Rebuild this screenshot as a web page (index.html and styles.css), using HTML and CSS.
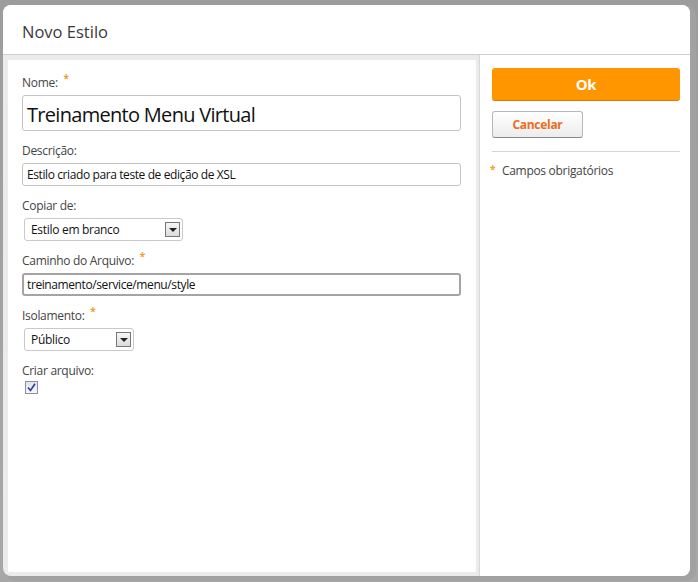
FILE: index.html
```html
<!DOCTYPE html>
<html lang="pt">
<head>
<meta charset="utf-8">
<title>Novo Estilo</title>
<link rel="stylesheet" href="styles.css">
</head>
<body>
<div class="backdrop">
  <div class="dialog">
    <div class="dialog-header">Novo Estilo</div>
    <div class="dialog-body">
      <div class="main-panel">
        <div class="field">
          <label class="label">Nome: <span class="req">*</span></label>
          <div class="input input-large">Treinamento Menu Virtual</div>
        </div>
        <div class="field">
          <label class="label">Descrição:</label>
          <div class="input">Estilo criado para teste de edição de XSL</div>
        </div>
        <div class="field">
          <label class="label">Copiar de:</label>
          <div class="select select-wide"><span>Estilo em branco</span><span class="arrow"></span></div>
        </div>
        <div class="field">
          <label class="label">Caminho do Arquivo: <span class="req">*</span></label>
          <div class="input input-focus">treinamento/service/menu/style</div>
        </div>
        <div class="field">
          <label class="label">Isolamento: <span class="req">*</span></label>
          <div class="select select-narrow"><span>Público</span><span class="arrow"></span></div>
        </div>
        <div class="field">
          <label class="label">Criar arquivo:</label>
          <div class="checkbox"><svg width="9" height="9" viewBox="0 0 9 9"><path d="M1 4.5 L3.5 7.5 L8 0.8" fill="none" stroke="#2a3f8f" stroke-width="1.6"/></svg></div>
        </div>
      </div>
      <div class="side-panel">
        <button class="btn-ok">Ok</button>
        <button class="btn-cancel">Cancelar</button>
        <div class="side-sep"></div>
        <div class="legend"><span class="req">*</span> Campos obrigatórios</div>
      </div>
    </div>
  </div>
</div>
</body>
</html>
```
FILE: styles.css
```css
html, body {
  margin: 0;
  padding: 0;
}
body {
  background: #b4b4b4;
  font-family: "Open Sans", "Noto Sans", sans-serif;
  width: 698px;
  height: 582px;
  overflow: hidden;
}
.backdrop {
  padding: 5px 8px 6px 3px;
  height: 582px;
  box-sizing: border-box;
  background: linear-gradient(#9c9c9c, #a8a8a8);
}
.dialog {
  width: 687px;
  height: 571px;
  background: #ebebeb;
  border-radius: 8px;
  box-shadow: 4px 3px 0 2px #a2a2a2;
  display: flex;
  flex-direction: column;
  overflow: hidden;
}
.dialog-header {
  height: 50px;
  background: #fff;
  border-bottom: 1px solid #cfcfcf;
  box-sizing: border-box;
  padding: 15px 0 0 19px;
  font-size: 16.5px;
  color: #3a3a3a;
}
.dialog-body {
  flex: 1;
  display: flex;
  padding: 5px 0 4px 5px;
}
.main-panel {
  width: 468px;
  background: #fff;
  padding: 14px 0 0 14px;
  box-sizing: border-box;
}
.side-panel {
  flex: 1;
  margin-left: 3px;
  margin-top: -5px;
  margin-bottom: -4px;
  background: #fff;
  border-left: 1px solid #d8d8d8;
  padding: 13px 9px 0 12px;
  display: flex;
  flex-direction: column;
  align-items: flex-start;
}
.field {
  margin-bottom: 11px;
}
.label {
  display: block;
  font-size: 12px;
  letter-spacing: -0.3px;
  color: #444;
  height: 17px;
  line-height: 17px;
  margin-bottom: 4px;
}
.req {
  color: #f0a030;
  font-weight: bold;
  font-size: 10px;
  position: relative;
  top: -5px;
  margin-left: 3px;
}
.input {
  width: 439px;
  height: 23px;
  box-sizing: border-box;
  border: 1px solid #c4c4c4;
  border-radius: 3px;
  font-size: 12px;
  letter-spacing: -0.4px;
  color: #111;
  padding: 2px 4px;
  line-height: 17px;
}
.input-large {
  height: 36px;
  font-size: 20px;
  letter-spacing: -0.7px;
  line-height: 30px;
  padding: 4px 4px 0;
}
.input-focus {
  border: 2px solid #a4a4a4;
  padding: 1px 3px;
}
.select {
  margin-left: 2px;
  height: 23px;
  box-sizing: border-box;
  border: 1px solid #c9c9c9;
  border-radius: 3px;
  display: flex;
  align-items: center;
  justify-content: space-between;
  padding: 0 2px 0 6px;
  font-size: 12px;
  letter-spacing: -0.3px;
  color: #111;
}
.select-wide { width: 159px; }
.select-narrow { width: 110px; }
.arrow {
  width: 15px;
  height: 15px;
  box-sizing: border-box;
  border: 1px solid #777;
  background: linear-gradient(#f6f6f6, #dcdcdc);
  position: relative;
}
.arrow::after {
  content: "";
  position: absolute;
  left: 3px;
  top: 5px;
  border-left: 4px solid transparent;
  border-right: 4px solid transparent;
  border-top: 4px solid #222;
}
.checkbox {
  margin-left: 3px;
  margin-top: -2px;
  width: 13px;
  height: 13px;
  box-sizing: border-box;
  border: 1px solid #8a8fa0;
  background: linear-gradient(#dfe3ee, #f6f7fa);
  display: flex;
  align-items: center;
  justify-content: center;
}
.btn-ok {
  width: 188px;
  height: 33px;
  border: none;
  border-bottom: 1px solid #d97b00;
  border-radius: 3px;
  background: #ff9600;
  color: #fff;
  font-family: inherit;
  font-weight: bold;
  font-size: 15px;
  letter-spacing: -0.3px;
  cursor: pointer;
}
.btn-cancel {
  margin-top: 10px;
  width: 91px;
  height: 27px;
  border: 1px solid #b8b8b8;
  border-bottom-color: #888;
  border-radius: 3px;
  background: linear-gradient(#ffffff, #ececec);
  color: #ea6e1c;
  font-family: inherit;
  font-weight: bold;
  font-size: 12px;
  letter-spacing: -0.3px;
}
.side-sep {
  margin-top: 13px;
  width: 188px;
  border-top: 1px solid #d4d4d4;
}
.legend {
  margin-top: 10px;
  font-size: 12px;
  letter-spacing: -0.3px;
  color: #444;
}
.legend .req {
  margin-left: -2px;
  margin-right: 4px;
  top: -2px;
}
```
